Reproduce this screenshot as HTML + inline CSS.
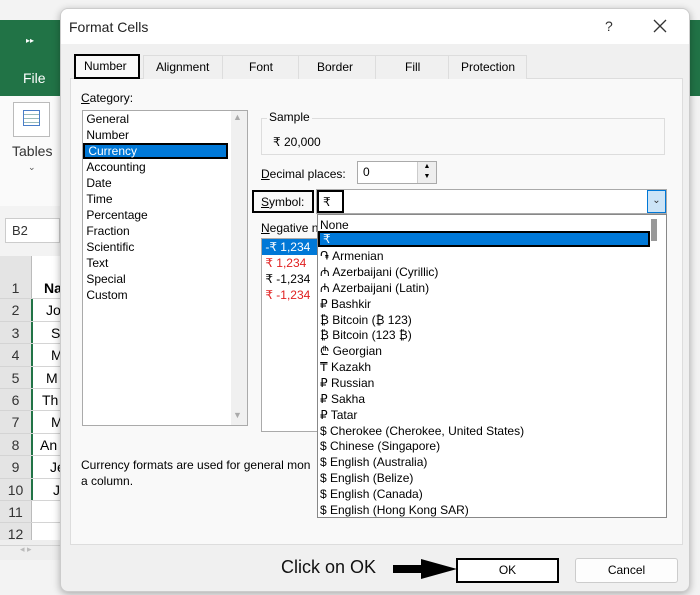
<!DOCTYPE html><html><head><style>
*{margin:0;padding:0;box-sizing:border-box}
body{width:700px;height:595px;position:relative;overflow:hidden;background:#f3f3f3;font-family:"Liberation Sans","DejaVu Sans",sans-serif;font-size:12px;color:#000}
.a{position:absolute}
.li{position:absolute;left:0;height:16px;line-height:16px;white-space:nowrap}
.rw{height:22.4px;border-bottom:1px solid #d4d4d4;position:relative}
.rw i{font-style:normal;position:absolute;left:0;width:31px;text-align:center;color:#333}
.rw span{position:absolute}
</style></head><body>
<!-- excel background -->
<div class="a" style="left:0;top:20px;width:60px;height:76px;background:#217346"></div>
<div class="a" style="left:690px;top:20px;width:10px;height:76px;background:#217346"></div>
<div class="a" style="left:26px;top:36px;color:#fff;font-size:8px">▸▸</div>
<div class="a" style="left:23px;top:70px;color:#fff;font-size:14px">File</div>
<div class="a" style="left:0;top:96px;width:60px;height:110px;background:#fafafa"></div>
<div class="a" style="left:13px;top:102px;width:37px;height:35px;border:1px solid #bbb;background:#fff"></div>
<div class="a" style="left:23px;top:110px;width:17px;height:16px;border:1px solid #4a7ec9;background:repeating-linear-gradient(#fff 0 3px,#9bb 3px 4px)"></div>
<div class="a" style="left:12px;top:143px;font-size:14px;color:#333">Tables</div>
<div class="a" style="left:28px;top:162px;font-size:9px;color:#555">⌄</div>
<div class="a" style="left:0;top:206px;width:60px;height:50px;background:#f3f3f3"></div>
<div class="a" style="left:5px;top:218px;width:55px;height:25px;border:1px solid #ccc;background:#fff;padding:4px 6px;font-size:13px;color:#333">B2</div>
<div class="a" style="left:0;top:256px;width:60px;height:300px;background:#fff"></div>
<div class="a" style="left:0;top:256px;width:32px;height:290px;background:#e4e4e4;border-right:1px solid #bbb"></div>
<div class="a" style="left:31px;top:298px;width:2px;height:203px;background:#217346"></div>
<div class="a" style="left:0;top:540px;width:60px;height:20px;background:#eee;color:#bbb;font-size:9px;padding:4px 20px">◂ ▸</div>
<div class="a" style="left:0;top:277px;font-size:14px;line-height:22px;width:60px">
<div class="rw"><i>1</i><b style="position:absolute;left:44px">Na</b></div>
<div class="rw"><i>2</i><span style="left:46px">Jo</span></div>
<div class="rw"><i>3</i><span style="left:51px">S</span></div>
<div class="rw"><i>4</i><span style="left:51px">M</span></div>
<div class="rw"><i>5</i><span style="left:46px">M</span></div>
<div class="rw"><i>6</i><span style="left:42px">Th</span></div>
<div class="rw"><i>7</i><span style="left:51px">M</span></div>
<div class="rw"><i>8</i><span style="left:40px">An</span></div>
<div class="rw"><i>9</i><span style="left:50px">Je</span></div>
<div class="rw"><i>10</i><span style="left:53px">J</span></div>
<div class="rw"><i>11</i></div><div class="rw"><i>12</i></div>
</div>
<!-- dialog -->
<div class="a" style="left:60px;top:8px;width:630px;height:584px;background:#f0f0f0;border:1px solid #ccc;border-radius:8px;box-shadow:0 2px 8px rgba(0,0,0,.3);overflow:hidden">
 <div class="a" style="left:0;top:0;width:630px;height:35px;background:#fff"></div>
 <div class="a" style="left:8px;top:10px;font-size:14px;color:#222">Format Cells</div>
 <div class="a" style="left:544px;top:9px;font-size:14px;color:#333">?</div>
 <svg class="a" style="left:592px;top:10px" width="14" height="14"><path d="M1 1L13 13M13 1L1 13" stroke="#333" stroke-width="1.3"/></svg>
</div>
<!-- tabs -->
<div class="a" style="left:70px;top:78px;width:613px;height:467px;background:#f9f9f9;border:1px solid #ddd"></div>
<div class="a" style="left:143px;top:55px;width:384px;height:24px;background:#f0f0f0;border:1px solid #ddd;border-bottom:none"></div>
<div class="a" style="left:156px;top:60px;font-size:12px">Alignment</div>
<div class="a" style="left:222px;top:55px;height:24px;border-left:1px solid #ddd"></div>
<div class="a" style="left:249px;top:60px">Font</div>
<div class="a" style="left:298px;top:55px;height:24px;border-left:1px solid #ddd"></div>
<div class="a" style="left:317px;top:60px">Border</div>
<div class="a" style="left:375px;top:55px;height:24px;border-left:1px solid #ddd"></div>
<div class="a" style="left:405px;top:60px">Fill</div>
<div class="a" style="left:448px;top:55px;height:24px;border-left:1px solid #ddd"></div>
<div class="a" style="left:461px;top:60px">Protection</div>
<div class="a" style="left:74px;top:54px;width:66px;height:25px;background:#f9f9f9;border:2px solid #000;padding:3px 0 0 8px">Number</div>
<!-- category -->
<div class="a" style="left:81px;top:91px"><u>C</u>ategory:</div>
<div class="a" style="left:82px;top:110px;width:166px;height:316px;background:#fff;border:1px solid #aaa"></div>
<div class="a" style="left:231px;top:111px;width:16px;height:314px;background:#f0f0f0"></div>
<div class="a" style="left:233px;top:112px;font-size:9px;color:#aaa">▲</div>
<div class="a" style="left:233px;top:410px;font-size:9px;color:#aaa">▼</div>
<div class="a" style="left:83px;top:111px;width:148px">
<div class="li" style="top:0">&nbsp;General</div><div class="li" style="top:16px">&nbsp;Number</div>
<div class="li" style="top:32px;width:145px;background:#0078d7;color:#fff;border:2px solid #000;line-height:12px">&nbsp;Currency</div>
<div class="li" style="top:48px">&nbsp;Accounting</div><div class="li" style="top:64px">&nbsp;Date</div><div class="li" style="top:80px">&nbsp;Time</div><div class="li" style="top:96px">&nbsp;Percentage</div><div class="li" style="top:112px">&nbsp;Fraction</div><div class="li" style="top:128px">&nbsp;Scientific</div><div class="li" style="top:144px">&nbsp;Text</div><div class="li" style="top:160px">&nbsp;Special</div><div class="li" style="top:176px">&nbsp;Custom</div>
</div>
<!-- sample -->
<div class="a" style="left:261px;top:118px;width:404px;height:37px;border:1px solid #ddd"></div>
<div class="a" style="left:267px;top:110px;background:#f9f9f9;padding:0 2px">Sample</div>
<div class="a" style="left:273px;top:135px">₹ 20,000</div>
<div class="a" style="left:261px;top:167px"><u>D</u>ecimal places:</div>
<div class="a" style="left:357px;top:161px;width:80px;height:23px;background:#fff;border:1px solid #aaa;padding:3px 5px">0</div>
<div class="a" style="left:417px;top:162px;width:19px;height:21px;background:#eee;border-left:1px solid #ccc;font-size:7px;text-align:center;line-height:10px">▲<br>▼</div>
<div class="a" style="left:252px;top:190px;width:62px;height:23px;border:2px solid #000;padding:3px 0 0 7px"><u>S</u>ymbol:</div>
<div class="a" style="left:316px;top:189px;width:351px;height:25px;background:#fff;border:1px solid #aaa"></div>
<div class="a" style="left:317px;top:190px;width:27px;height:23px;border:2px solid #000;padding:3px 0 0 4px">₹</div>
<div class="a" style="left:647px;top:190px;width:19px;height:23px;background:#cce4f7;border:1px solid #0078d7;text-align:center;font-size:10px;line-height:20px;color:#333">⌄</div>
<div class="a" style="left:261px;top:221px"><u>N</u>egative n</div>
<div class="a" style="left:261px;top:238px;width:60px;height:194px;background:#fff;border:1px solid #aaa"></div>
<div class="a" style="left:262px;top:239px;width:56px">
<div class="li" style="top:0;width:56px;background:#0078d7;color:#fff">&nbsp;-₹ 1,234</div><div class="li" style="top:16px;color:#e02020">&nbsp;₹ 1,234</div><div class="li" style="top:32px">&nbsp;₹ -1,234</div><div class="li" style="top:48px;color:#e02020">&nbsp;₹ -1,234</div>
</div>
<!-- dropdown -->
<div class="a" style="left:317px;top:214px;width:350px;height:304px;background:#fff;border:1px solid #888;overflow:hidden">
<div class="a" style="left:333px;top:4px;width:6px;height:22px;background:#999"></div>
<div class="a" style="left:2px;top:0;width:330px;font-size:12px">
<div class="li" style="top:2px">None</div>
<div class="li" style="top:16px;width:332px;left:-2px;background:#0078d7;color:#fff;border:2px solid #000;line-height:12px;padding-left:3px">₹</div>
<div class="li" style="top:33px">֏ Armenian</div><div class="li" style="top:49px">₼ Azerbaijani (Cyrillic)</div><div class="li" style="top:65px">₼ Azerbaijani (Latin)</div><div class="li" style="top:81px">₽ Bashkir</div><div class="li" style="top:97px">₿ Bitcoin (₿ 123)</div><div class="li" style="top:112px">₿ Bitcoin (123 ₿)</div><div class="li" style="top:128px">₾ Georgian</div><div class="li" style="top:144px">₸ Kazakh</div><div class="li" style="top:160px">₽ Russian</div><div class="li" style="top:176px">₽ Sakha</div><div class="li" style="top:192px">₽ Tatar</div><div class="li" style="top:208px">$ Cherokee (Cherokee, United States)</div><div class="li" style="top:223px">$ Chinese (Singapore)</div><div class="li" style="top:239px">$ English (Australia)</div><div class="li" style="top:255px">$ English (Belize)</div><div class="li" style="top:271px">$ English (Canada)</div><div class="li" style="top:287px">$ English (Hong Kong SAR)</div>
</div></div>
<div class="a" style="left:81px;top:457px;line-height:16px">Currency formats are used for general mon<br>a column.</div>
<!-- bottom -->
<div class="a" style="left:281px;top:557px;font-size:18px;color:#111">Click on OK</div>
<div class="a" style="left:393px;top:565px;width:30px;height:8px;background:#000"></div>
<div class="a" style="left:421px;top:559px;width:0;height:0;border-top:10px solid transparent;border-bottom:10px solid transparent;border-left:36px solid #000"></div>
<div class="a" style="left:456px;top:558px;width:103px;height:25px;background:#fff;border:2px solid #000;text-align:center;line-height:21px">OK</div>
<div class="a" style="left:575px;top:558px;width:103px;height:25px;background:#fdfdfd;border:1px solid #ccc;border-radius:3px;text-align:center;line-height:23px">Cancel</div>
</body></html>
